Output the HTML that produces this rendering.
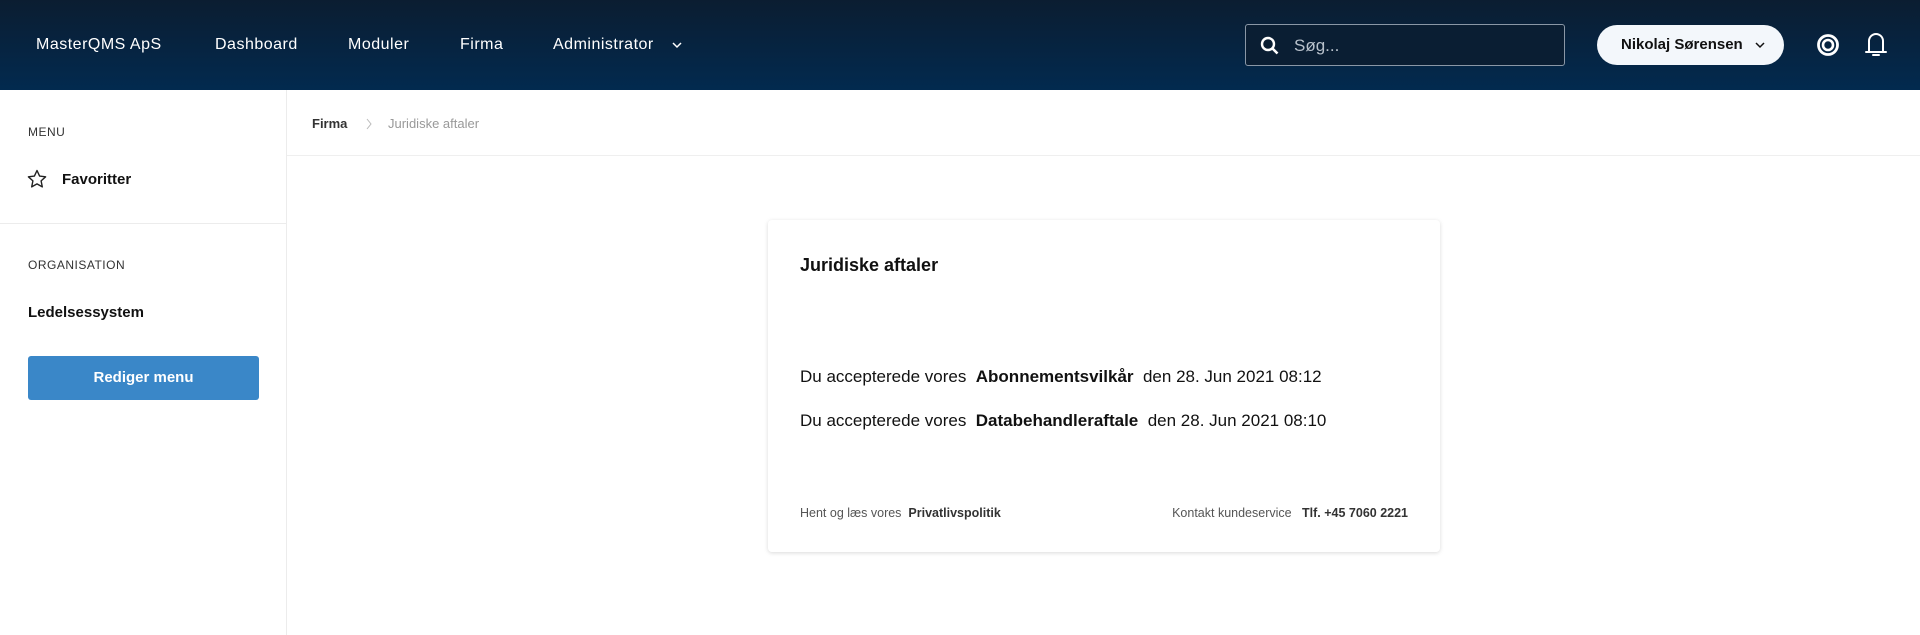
<!DOCTYPE html>
<html><head><meta charset="utf-8"><style>
*{box-sizing:border-box;margin:0;padding:0}
body{width:1920px;height:635px;overflow:hidden;background:#fff;font-family:"Liberation Sans",sans-serif;color:#111;position:relative}
.hdr{position:absolute;left:0;top:0;width:1920px;height:90px;background:linear-gradient(#0b1d31,#022a4f)}
.hdr .t{position:absolute;top:36px;color:#fff;font-size:16px;letter-spacing:.5px}
.search{position:absolute;left:1245px;top:24px;width:320px;height:42px;border:1px solid #8a97a6;border-radius:3px;background:#0a1e33}
.search span{position:absolute;left:48px;top:11px;color:#b9c2cc;font-size:17px}
.pill{position:absolute;left:1597px;top:25px;width:187px;height:40px;border-radius:20px;background:#f3f7fb;font-weight:bold;font-size:15px;line-height:40px;padding-left:24px;color:#111}
.side{position:absolute;left:0;top:90px;width:287px;height:545px;border-right:1px solid #ececec}
.lbl{position:absolute;left:28px;font-size:12px;color:#333;letter-spacing:.5px}
.item{position:absolute;font-weight:bold;font-size:15px}
.btn{position:absolute;left:28px;top:266px;width:231px;height:44px;background:#3a87c8;border-radius:3px;color:#fff;font-weight:bold;font-size:15px;text-align:center;line-height:44px}
.bc{position:absolute;left:287px;top:90px;width:1633px;height:66px;border-bottom:1px solid #efefef}
.card{position:absolute;left:768px;top:220px;width:672px;height:332px;border-radius:4px;box-shadow:0 1px 4px rgba(0,0,0,.15);background:#fff}
.card .h{position:absolute;left:32px;top:35px;font-size:18px;font-weight:bold}
.card .l{position:absolute;left:32px;font-size:17px;color:#111}
.card .f{position:absolute;top:286px;font-size:12.5px;color:#555}
b{color:#111}
</style></head><body>
<div class="hdr">
<div class="t" style="left:36px">MasterQMS ApS</div>
<div class="t" style="left:215px">Dashboard</div>
<div class="t" style="left:348px">Moduler</div>
<div class="t" style="left:460px">Firma</div>
<div class="t" style="left:553px">Administrator</div>
<svg style="position:absolute;left:672px;top:41px" width="10" height="8"><path d="M1 2l4 4 4-4" stroke="#fff" stroke-width="1.5" fill="none"/></svg>
<div class="search"><svg style="position:absolute;left:14px;top:11px" width="20" height="20"><circle cx="8" cy="8" r="6" stroke="#fff" stroke-width="2.4" fill="none"/><path d="M12.5 12.5l5 5" stroke="#fff" stroke-width="2.6"/></svg><span>Søg...</span></div>
<div class="pill">Nikolaj Sørensen<svg style="position:absolute;left:158px;top:16px" width="10" height="8"><path d="M1 2l4 4 4-4" stroke="#111" stroke-width="1.5" fill="none"/></svg></div>
<svg style="position:absolute;left:1816px;top:33px" width="24" height="24"><circle cx="12" cy="12" r="9.5" stroke="#fff" stroke-width="2.8" fill="none"/><circle cx="12" cy="12" r="5" stroke="#fff" stroke-width="2.6" fill="none"/></svg>
<svg style="position:absolute;left:1864px;top:31px" width="24" height="28"><path d="M5 20V10a7 7 0 0 1 14 0v10M2 21h20M9 24h6" stroke="#fff" stroke-width="2" fill="none" stroke-linecap="round"/></svg>
</div>
<div class="side">
<div class="lbl" style="top:35px">MENU</div>
<svg style="position:absolute;left:27px;top:79px" width="20" height="20"><path d="M10 1.5l2.6 5.6 6 .7-4.5 4.1 1.2 6-5.3-3-5.3 3 1.2-6L1.4 7.8l6-.7z" stroke="#222" stroke-width="1.4" fill="none" stroke-linejoin="round"/></svg>
<div class="item" style="left:62px;top:81px">Favoritter</div>
<div style="position:absolute;left:0;top:133px;width:286px;border-top:1px solid #ececec"></div>
<div class="lbl" style="top:168px">ORGANISATION</div>
<div class="item" style="left:28px;top:214px">Ledelsessystem</div>
<div class="btn">Rediger menu</div>
</div>
<div class="bc">
<span style="position:absolute;left:25px;top:26px;font-size:13px;font-weight:bold;color:#333">Firma</span>
<svg style="position:absolute;left:78px;top:28px" width="8" height="12"><path d="M2 1l4 5-4 5" stroke="#bbb" fill="none"/></svg>
<span style="position:absolute;left:101px;top:26px;font-size:13px;color:#999">Juridiske aftaler</span>
</div>
<div class="card">
<div class="h">Juridiske aftaler</div>
<div class="l" style="top:147px">Du accepterede vores&nbsp; <b>Abonnementsvilkår</b>&nbsp; den 28. Jun 2021 08:12</div>
<div class="l" style="top:191px">Du accepterede vores&nbsp; <b>Databehandleraftale</b>&nbsp; den 28. Jun 2021 08:10</div>
<div class="f" style="left:32px">Hent og læs vores&nbsp; <b style="color:#333">Privatlivspolitik</b></div>
<div class="f" style="right:32px">Kontakt kundeservice&nbsp;&nbsp; <b style="color:#333">Tlf. +45 7060 2221</b></div>
</div>
</body></html>
